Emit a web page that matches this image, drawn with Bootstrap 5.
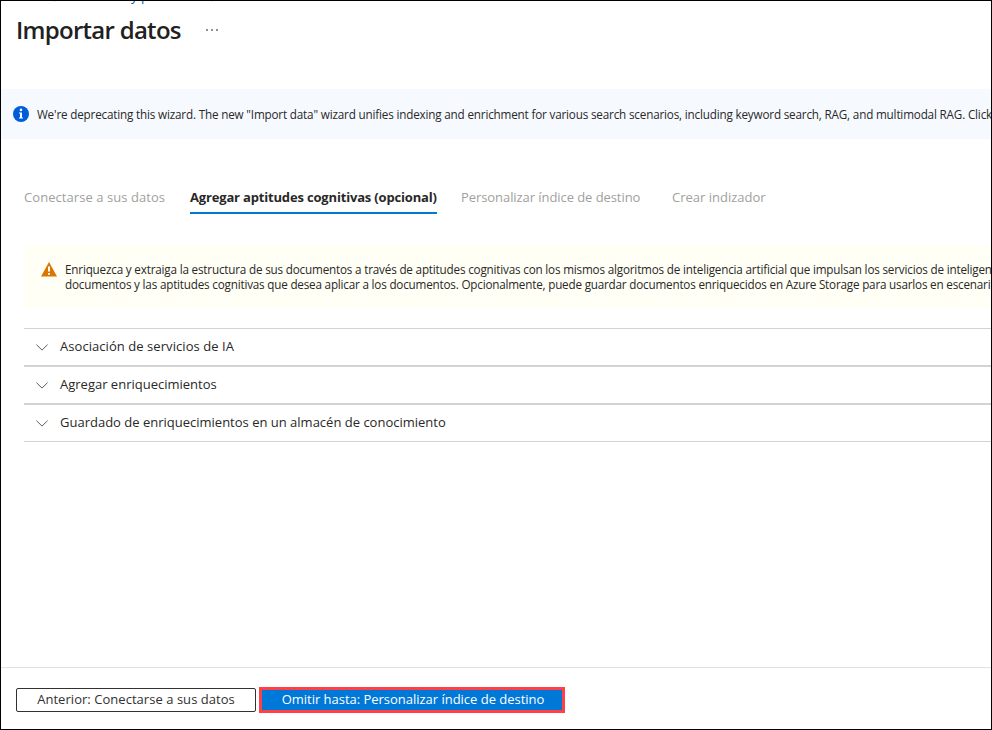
<!DOCTYPE html>
<html lang="es">
<head>
<meta charset="utf-8">
<meta name="viewport" content="width=device-width, initial-scale=1">
<title>Importar datos</title>
<link href="https://cdn.jsdelivr.net/npm/bootstrap@5.3.0/dist/css/bootstrap.min.css" rel="stylesheet">
<style>
  body { font-family: "Open Sans", "Noto Sans", sans-serif; font-size: 13px; color: #292827; background: #fff; }
  .blade { width: 992px; height: 730px; border: 1px solid #000; white-space: nowrap; }
  .crumbs { height: 4px; padding-left: 53px; color: #0065b3; line-height: 16px; }
  .crumbs div { margin-top: -13px; }
  .crumbs .sep { color: #8a8886; width: 5px; position: relative; top: 2px; }
  .crumbs .gap-a { width: 72px; }
  .crumbs .gap-b { width: 62px; }
  .blade-head { height: 84px; padding: 8px 0 0 15px; }
  .blade-head h1 { font-size: 24px; font-weight: 600; line-height: 34px; letter-spacing: -.72px; color: #212121; width: 190px; }
  .blade-head svg { margin-top: 11px; }
  .info-bar { height: 50px; background: #f6faff; padding-left: 12px; font-size: 11.7px; letter-spacing: -.176px; }
  .info-bar span { padding-top: 1px; }
  .info-bar svg { margin-right: 8px; }
  .steps { margin: 45px 0 0 23px; height: 30px; }
  .steps .nav-link { padding: 0; height: 30px; line-height: 26px; color: #a19f9d; border-bottom: 2px solid transparent; }
  .steps .nav-link.active { color: #292827; font-weight: 700; letter-spacing: -.17px; border-color: #0078d4; }
  .step-1 { width: 166px; letter-spacing: .06px; }
  .step-2 { width: 247px; }
  .step-3 { width: 211px; margin-left: 24px; letter-spacing: -.07px; }
  .warn-box { margin: 31px 0 0 23px; height: 63px; background: #fffff6; padding: 17px 0 0 17px; font-size: 11.7px; line-height: 15px; letter-spacing: -.185px; }
  .warn-box svg { margin-right: 8px; }
  .warn-box .second { letter-spacing: -.198px; }
  .sections { margin: 20px 0 0 23px; border-top: 1px solid #d2d4d4; }
  .sections > div { height: 38px; padding-left: 12px; border-bottom: 2px solid #d2d4d4; }
  .sections > div:first-child { letter-spacing: .06px; }
  .sections > div:last-child { height: 37px; border-bottom-width: 1px; }
  .sections svg { margin-right: 12px; }
  .foot { height: 62px; border-top: 1px solid #e1e1e1; padding: 19px 0 0 15px; }
  .foot .btn { height: 24px; border-radius: 2px; font-size: 13px; line-height: 19px; padding: 0 0 2px; width: 240px; border: 1px solid #323130; color: #323130; letter-spacing: .04px; margin-top: 1px; }
  .foot .btn-skip { width: 306px; height: 26px; margin: 0 0 0 3px; border: 3px solid #ff4147; border-radius: 0; background: #0078d7; color: #fff; line-height: 18px; padding: 0 0 2px 2px; letter-spacing: -.02px; }
</style>
</head>
<body>
<main class="blade d-flex flex-column overflow-hidden">
  <div class="crumbs overflow-hidden flex-shrink-0">
    <div class="d-flex"><span class="sep">&gt;</span><span class="gap-a"></span><span>y p</span><span class="gap-b"></span><span class="sep">&gt;</span></div>
  </div>
  <header class="blade-head d-flex align-items-start flex-shrink-0">
    <h1 class="mb-0">Importar datos</h1>
    <svg width="12" height="10" viewBox="0 0 12 10" fill="#767676"><path d="M0 5h2v2H0zM5 5h2v2H5zM10 5h2v2h-2z" opacity=".8"/></svg>
  </header>
  <div class="info-bar d-flex align-items-center flex-shrink-0">
    <svg class="flex-shrink-0" width="16" height="16" viewBox="0 0 16 16"><circle cx="8" cy="8" r="8" fill="#015cda"/><circle cx="8" cy="3.9" r="1.3" fill="#fff"/><path d="M6 6.500h3v5h1v1H6v-1h1V7.500H6z" fill="#fff"/></svg>
    <span>We're deprecating this wizard. The new "Import data" wizard unifies indexing and enrichment for various search scenarios, including keyword search, RAG, and multimodal RAG. Click</span>
  </div>
  <nav class="steps nav flex-nowrap flex-shrink-0">
    <a class="nav-link step-1">Conectarse a sus datos</a>
    <a class="nav-link step-2 active">Agregar aptitudes cognitivas (opcional)</a>
    <a class="nav-link step-3">Personalizar índice de destino</a>
    <a class="nav-link">Crear indizador</a>
  </nav>
  <div class="warn-box d-flex align-items-start flex-shrink-0">
    <svg class="flex-shrink-0" width="16" height="15" viewBox="0 0 16 15"><path d="M8 0 16 14.500H0z" fill="#db7500"/><path d="M7 4.500h2v5H7zM7 11h2v1.700H7z" fill="#fff"/></svg>
    <div>
      <div>Enriquezca y extraiga la estructura de sus documentos a través de aptitudes cognitivas con los mismos algoritmos de inteligencia artificial que impulsan los servicios de inteligen</div>
      <div class="second">documentos y las aptitudes cognitivas que desea aplicar a los documentos. Opcionalmente, puede guardar documentos enriquecidos en Azure Storage para usarlos en escenari</div>
    </div>
  </div>
  <div class="sections flex-shrink-0">
    <div class="d-flex align-items-center"><svg width="12" height="7" viewBox="0 0 12 7" fill="none" stroke="#605e5c"><path d="M.4.6 6 6.100 11.600.6"/></svg><span>Asociación de servicios de IA</span></div>
    <div class="d-flex align-items-center"><svg width="12" height="7" viewBox="0 0 12 7" fill="none" stroke="#605e5c"><path d="M.4.6 6 6.100 11.600.6"/></svg><span>Agregar enriquecimientos</span></div>
    <div class="d-flex align-items-center"><svg width="12" height="7" viewBox="0 0 12 7" fill="none" stroke="#605e5c"><path d="M.4.6 6 6.100 11.600.6"/></svg><span>Guardado de enriquecimientos en un almacén de conocimiento</span></div>
  </div>
  <footer class="foot d-flex align-items-start mt-auto flex-shrink-0">
    <button class="btn">Anterior: Conectarse a sus datos</button>
    <button class="btn btn-skip">Omitir hasta: Personalizar índice de destino</button>
  </footer>
</main>
<script src="https://cdn.jsdelivr.net/npm/bootstrap@5.3.0/dist/js/bootstrap.bundle.min.js"></script>
</body>
</html>
